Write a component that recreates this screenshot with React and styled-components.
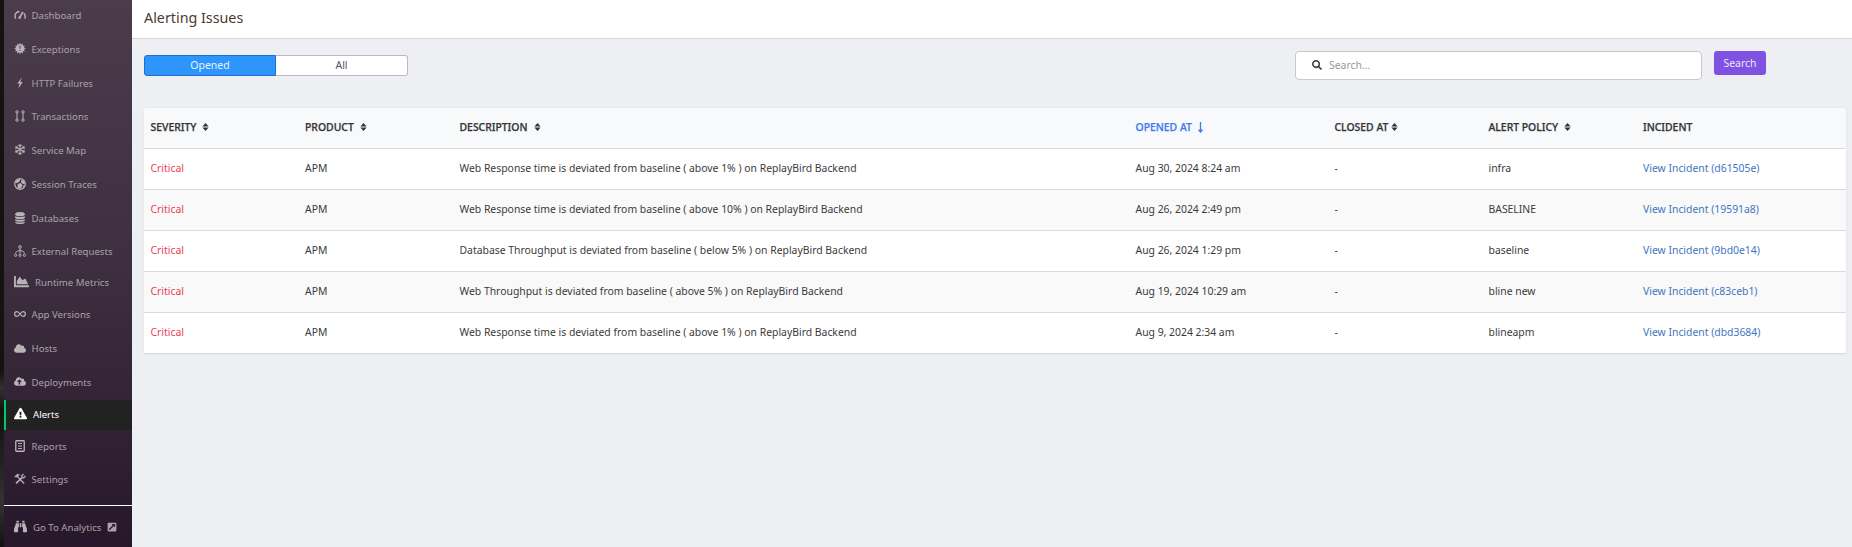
import React from 'react';
import styled, { createGlobalStyle, css } from 'styled-components';
import { FaChartArea, FaCloud, FaCloudUploadAlt, FaExclamationTriangle, FaBinoculars, FaSearch, FaExternalLinkSquareAlt } from 'react-icons/fa';

const GlobalStyle = createGlobalStyle`
  * { box-sizing: border-box; }
  html, body { margin: 0; padding: 0; }
  body { font-family: "Noto Sans", sans-serif; font-size: 11px; color: #3a3a3a; background: #eeeff3; }
`;
const Page = styled.div`display: flex; height: 547px; overflow: hidden;`;
const Edge = styled.div`width: 4px; background: linear-gradient(#15120f 0 68%, #33312f 71%, #121111 75%, #242322 85%, #343332 92%, #111 100%);`;
const Sidebar = styled.nav`width: 128px; flex: none; display: flex; flex-direction: column; background: linear-gradient(#4a3c4b, #3d2f40 48%, #27172a);`;
const NavItem = styled.a`
  display: flex; align-items: center; height: ${p => p.$h}px; flex: none;
  padding: 0 0 2px 10px; color: #a9a3a8; font-size: 9.65px; white-space: nowrap;
  ${p => p.$active && css`background: #222; color: #fff; padding-left: 8px; border-left: 2px solid #00c96b;`}
`;
const IconSlot = styled.span`
  display: flex; align-items: center; justify-content: center; width: ${p => p.$w || 12}px; margin-right: ${p => p.$gap || 5.5}px;
  padding-bottom: 1px; flex: none; color: ${p => (p.$active ? '#fff' : '#b8b3b6')};
`;
const Divider = styled.div`flex: none; height: 1px; margin-top: 9px; background: #fff;`;
const External = styled(FaExternalLinkSquareAlt)`margin-left: 6px;`;
const Main = styled.main`flex: 1; min-width: 0; display: flex; flex-direction: column;`;
const Header = styled.header`height: 39px; padding: 0 12px; background: #fff; border-bottom: 1px solid #d6d6d6; display: flex; align-items: center;`;
const Title = styled.h1`margin: 0 0 3px; font-size: 14.3px; font-weight: 400; color: #4b3a30;`;
const Toolbar = styled.div`display: flex; align-items: flex-start; height: 69px; padding: 12px 86px 0 12px;`;
const Tabs = styled.div`display: flex; margin-top: 4px; width: 264px; height: 21px;`;
const Tab = styled.button`
  width: 132px; padding: 0 0 1px; font: inherit; font-size: 10.5px; color: #57516b; background: #fff;
  border: 1px solid #b9b8ce; border-left: 0; border-radius: 0 3px 3px 0;
  ${p => p.$active && css`color: #e6f3ff; background: #2d95fb; border: 1px solid #1a6fd0; border-radius: 3px 0 0 3px;`}
`;
const SearchField = styled.label`
  display: flex; align-items: center; gap: 7px; width: 407px; height: 29px; margin: 0 12px 0 auto;
  padding: 0 0 1px 16px; background: #fff; border: 1px solid #c9c9c9; border-radius: 4px;
`;
const Input = styled.input`flex: 1; border: 0; outline: 0; padding: 0; font: inherit; font-size: 10.4px; background: transparent; &::placeholder { color: #999; }`;
const SearchButton = styled.button`width: 52px; height: 24px; padding: 0; border: 0; border-radius: 3px; background: #8052e3; color: #eee6fd; font: inherit; font-size: 10.4px;`;
const TableCard = styled.section`margin: 0 6px 0 12px; border-radius: 3px 3px 0 0; box-shadow: 0 0 3px rgba(0,0,0,.06);`;
const Row = styled.div`
  display: grid; grid-template-columns: 154.5px 154.5px 676px 199px 154px 154.5px 1fr; align-items: center;
  height: 41px; padding: 0 0 2px 6.5px; font-size: 10.4px; border-bottom: 1px solid #dadcdc;
  background: ${p => (p.$alt ? '#f9f9f9' : '#fff')};
`;
const HeadRow = styled(Row)`background: #f8f9fb; font-weight: 500; -webkit-text-stroke: 0.25px currentColor; border-radius: 3px 3px 0 0;`;
const HeadCell = styled.div`display: flex; align-items: center; gap: ${p => p.$gap ?? 6}px; white-space: nowrap; color: ${p => (p.$sorted ? '#3f78ee' : '#333')};`;
const Cell = styled.div`white-space: nowrap; padding-bottom: 1px;`;
const Severity = styled(Cell)`color: #e83e55;`;
const IncidentLink = styled.a`color: #4176bf;`;

const Gauge = () => <svg width="13" height="10" viewBox="0 0 13 10" fill="none" stroke="currentColor"><path d="M1.8 9C-.2 4.5 2.4 1.2 6 1.2M10.5 3C12.6 5 12.4 7.3 11.5 9" strokeWidth="1.5" /><path d="M6.1 7.8L9.6 1.6" strokeWidth="1.8" /><circle cx="6.1" cy="8" r="1.3" fill="currentColor" stroke="none" /></svg>;
const burst = Array.from({ length: 24 }, (_, i) => {
  const r = i % 2 ? 4.3 : 6.2;
  const a = (i * Math.PI) / 12;
  return `${(6.5 + r * Math.sin(a)).toFixed(2)},${(6.5 - r * Math.cos(a)).toFixed(2)}`;
}).join(' ');
const Burst = () => <svg width="13" height="13" viewBox="0 0 13 13"><polygon points={burst} fill="currentColor" /><path d="M6.5 3.6v3.3M6.5 8v1.3" stroke="#463848" strokeWidth="1.1" /></svg>;
const Bolt = () => <svg width="12" height="12" viewBox="0 0 12 12"><path d="M7.8.5L3.3 6.6l2.3-.2L4.4 11.5 8.7 4.9l-2.4.2z" fill="currentColor" /></svg>;
const Transfers = () => <svg width="10" height="12" viewBox="0 0 10 12" fill="none" stroke="currentColor"><circle cx="2" cy="1.9" r="1.2" /><circle cx="8" cy="1.9" r="1.2" /><circle cx="2" cy="10.1" r="1.2" /><circle cx="8" cy="10.1" r="1.2" /><path d="M2 3v6M8 3v6" /></svg>;
const Snowflake = () => (
  <svg width="13" height="13" viewBox="0 0 13 13" fill="none" stroke="currentColor">
    {[0, 60, 120, 180, 240, 300].map(a => <path key={a} d="M6.5 6.5V.5M4.8 1.6l1.7 1.6 1.7-1.6" strokeWidth="1.1" transform={`rotate(${a} 6.5 6.5)`} />)}
  </svg>
);
const Globe = () => <svg width="12" height="12" viewBox="0 0 12 12"><circle cx="6" cy="6" r="5.3" fill="none" stroke="currentColor" strokeWidth="1.2" /><path d="M1 5.2L3.3 1.3 6.3.9 5.8 3 3.8 4.8zM7.2 1.9l3 1.2.8 2.6-2.1.2L7 4.2zM3.7 6.1l2.9-1 2 2.2-2.2 3.8-2.9-1.4zM9.3 7.4l1.9-.4-2.5 3.6z" fill="currentColor" /></svg>;
const Database = () => <svg width="10" height="12" viewBox="0 0 10 12" fill="currentColor"><ellipse cx="5" cy="2.2" rx="4.8" ry="2.1" /><path d="M.2 4c1.4 1.5 8.2 1.5 9.6 0v1.7c-1 2-8.6 2-9.6 0zM.2 6.9c1.4 1.5 8.2 1.5 9.6 0v1.3c-1 2-8.6 2-9.6 0zM.2 9.4c1.4 1.5 8.2 1.5 9.6 0v1c-1 2-8.6 2-9.6 0z" /></svg>;
const Network = () => <svg width="12" height="12" viewBox="0 0 12 12" fill="none" stroke="currentColor"><circle cx="6" cy="1.9" r="1.3" /><path d="M6 3.2v5.5M1.8 8.7c0-2 .8-3 4.2-3s4.2 1 4.2 3" /><circle cx="1.6" cy="10.3" r="1.1" /><circle cx="6" cy="10.3" r="1.1" /><circle cx="10.4" cy="10.3" r="1.1" /></svg>;
const Infinite = () => <svg width="13" height="8" viewBox="0 0 13 8" fill="none" stroke="currentColor" strokeWidth="1.3"><path d="M6.5 4C5.2 2.2 4.4 1.4 3.2 1.4a2.5 2.6 0 0 0 0 5.2C4.4 6.6 5.2 5.8 6.5 4S8.6 1.4 9.8 1.4a2.5 2.6 0 0 1 0 5.2C8.6 6.6 7.8 5.8 6.5 4z" /></svg>;
const Report = () => <svg width="10" height="12" viewBox="0 0 10 12" fill="none" stroke="currentColor"><rect x=".75" y=".75" width="8.5" height="10.5" rx=".7" strokeWidth="1.3" /><path d="M3 3.5h4M3 6h4M3 8.5h4" /></svg>;
const Tools = () => <svg width="13" height="12" viewBox="0 0 13 12" fill="none" stroke="currentColor"><path d="M2.2 10.8L9.4 4" strokeWidth="1.7" /><path d="M11.9 2.6L10 4.3 8.7 3 10.4 1C8.5.7 7.5 2 8 3.5M12.1 2.6C12.4 4.6 11 5.4 9.6 5" /><path d="M.5 3.7L3.3.9 6 1 3.6 3.9z" fill="currentColor" strokeWidth=".5" /><path d="M3.5 3.2l7.5 7.6" strokeWidth="1.4" /></svg>;
const ArrowDown = () => <svg width="5" height="11" viewBox="0 0 5 11" fill="none" stroke="currentColor" strokeWidth="1.3"><path d="M2.5 0v10M.5 7.8l2 2.2 2-2.2" /></svg>;
const Sort = () => <svg width="7" height="8" viewBox="0 0 7 8" fill="currentColor"><path d="M3.5 0L6.6 3.5H.4zM3.5 8L.4 4.5h6.2z" /></svg>;

const nav = [
  ['Dashboard', <Gauge />, 33], ['Exceptions', <Burst />, 34], ['HTTP Failures', <Bolt />, 34],
  ['Transactions', <Transfers />, 33], ['Service Map', <Snowflake />, 34], ['Session Traces', <Globe />, 34],
  ['Databases', <Database />, 34], ['External Requests', <Network />, 33],
  ['Runtime Metrics', <FaChartArea size={15} />, 28, 15, 6], ['App Versions', <Infinite />, 36],
  ['Hosts', <FaCloud size={13} />, 33], ['Deployments', <FaCloudUploadAlt size={13} />, 34],
  ['Alerts', <FaExclamationTriangle size={13} />, 30, 13, 6], ['Reports', <Report />, 35], ['Settings', <Tools />, 31],
];
const columns = [['SEVERITY', 6], ['PRODUCT', 6], ['DESCRIPTION', 6], ['OPENED AT', 6], ['CLOSED AT', 3], ['ALERT POLICY', 6], ['INCIDENT']];
const issues = [
  ['Web Response time is deviated from baseline ( above 1% ) on ReplayBird Backend', 'Aug 30, 2024 8:24 am', 'infra', 'd61505e'],
  ['Web Response time is deviated from baseline ( above 10% ) on ReplayBird Backend', 'Aug 26, 2024 2:49 pm', 'BASELINE', '19591a8'],
  ['Database Throughput is deviated from baseline ( below 5% ) on ReplayBird Backend', 'Aug 26, 2024 1:29 pm', 'baseline', '9bd0e14'],
  ['Web Throughput is deviated from baseline ( above 5% ) on ReplayBird Backend', 'Aug 19, 2024 10:29 am', 'bline new', 'c83ceb1'],
  ['Web Response time is deviated from baseline ( above 1% ) on ReplayBird Backend', 'Aug 9, 2024 2:34 am', 'blineapm', 'dbd3684'],
];

export default function App() {
  return (
    <Page>
      <GlobalStyle />
      <Edge />
      <Sidebar>
        {nav.map(([label, icon, h, w, gap]) => (
          <NavItem key={label} $h={h} $active={label === 'Alerts'}>
            <IconSlot $w={w} $gap={gap} $active={label === 'Alerts'}>{icon}</IconSlot>{label}
          </NavItem>
        ))}
        <Divider />
        <NavItem $h={44}><IconSlot $w={13} $gap={6}><FaBinoculars size={13} /></IconSlot>Go To Analytics<External size={10} /></NavItem>
      </Sidebar>
      <Main>
        <Header><Title>Alerting Issues</Title></Header>
        <Toolbar>
          <Tabs><Tab $active>Opened</Tab><Tab>All</Tab></Tabs>
          <SearchField><FaSearch size={10} /><Input placeholder="Search..." /></SearchField>
          <SearchButton>Search</SearchButton>
        </Toolbar>
        <TableCard>
          <HeadRow>
            {columns.map(([name, gap]) => (
              <HeadCell key={name} $gap={gap} $sorted={name === 'OPENED AT'}>
                {name}{name === 'OPENED AT' ? <ArrowDown /> : name !== 'INCIDENT' && <Sort />}
              </HeadCell>
            ))}
          </HeadRow>
          {issues.map(([description, opened, policy, id], i) => (
            <Row key={id} $alt={i % 2 === 1}>
              <Severity>Critical</Severity><Cell>APM</Cell><Cell>{description}</Cell><Cell>{opened}</Cell><Cell>-</Cell><Cell>{policy}</Cell>
              <Cell><IncidentLink>View Incident ({id})</IncidentLink></Cell>
            </Row>
          ))}
        </TableCard>
      </Main>
    </Page>
  );
}
